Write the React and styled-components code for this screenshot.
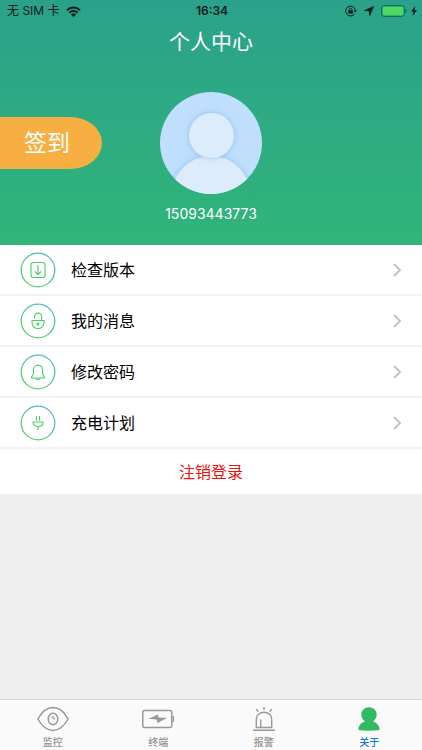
import React, { useState } from "react";
import styled, { createGlobalStyle } from "styled-components";

const GlobalStyle = createGlobalStyle`
  *, *::before, *::after { box-sizing: border-box; }
  body {
    margin: 0;
    background: #efefef;
    font-family: Inter, "Noto Sans CJK SC", sans-serif;
  }
  button { font-family: inherit; margin: 0; padding: 0; border: 0; background: none; cursor: pointer; }
  svg { display: block; flex: none; }
`;

const Page = styled.div`
  display: flex;
  flex-direction: column;
  min-height: 100vh;
`;

const Header = styled.header`
  height: 245px;
  display: flex;
  flex-direction: column;
  background: linear-gradient(#2ba18b, #30b579);
`;

const StatusBar = styled.div`
  display: grid;
  grid-template-columns: 1fr auto 1fr;
  align-items: center;
  height: 20px;
  padding: 2px 5px 0 7px;
  font-size: 12px;
  line-height: 18px;
  color: #0b1a17;
`;

const StatusGroup = styled.div`
  display: flex;
  align-items: center;
  gap: ${(p) => p.$gap}px;
  justify-content: ${(p) => (p.$end ? "flex-end" : "flex-start")};
`;

const Clock = styled.time`
  font-weight: 600;
`;

const Title = styled.h1`
  margin: 0;
  padding-top: 6px;
  text-align: center;
  font-size: 21px;
  line-height: 32px;
  font-weight: 400;
  color: #fff;
`;

const Profile = styled.section`
  display: grid;
  grid-template-columns: 1fr auto 1fr;
  align-items: center;
  padding-top: 34px;
`;

const CheckIn = styled.button`
  && {
    width: 102px;
    height: 52px;
    padding-right: 8px;
    border-radius: 0 32px 32px 0 / 0 26px 26px 0;
    background: #f8af42;
    color: #fff;
    font-size: 23px;
    line-height: 32px;
  }
`;

const Phone = styled.p`
  margin: 0;
  padding-top: 10px;
  text-align: center;
  font-size: 14px;
  line-height: 20px;
  color: #fff;
`;

const Menu = styled.ul`
  list-style: none;
  margin: 0;
  padding: 0;
  background: #fff;
`;

const MenuRow = styled.button`
  && {
    display: flex;
    align-items: center;
    width: 100%;
    height: 51px;
    padding: 0 20px;
    border-bottom: 2px solid #f4f4f5;
    text-align: left;
  }
`;

const MenuLabel = styled.span`
  flex: 1;
  padding-left: 15px;
  font-size: 16px;
  line-height: 24px;
  color: #000;
`;

const Logout = styled.button`
  && {
    width: 100%;
    height: 45px;
    background: #fff;
    color: #e8140f;
    font-size: 16px;
    line-height: 24px;
  }
`;

const TabBar = styled.nav`
  display: grid;
  grid-template-columns: repeat(4, 1fr);
  height: 51px;
  margin-top: auto;
  border-top: 1px solid #d3d3d3;
  background: #fafafa;
`;

const Tab = styled.button`
  && {
    display: flex;
    flex-direction: column;
    align-items: center;
    padding-top: 4px;
    color: ${(p) => (p.$active ? "#1673e6" : "#929292")};
    font-size: 10px;
    line-height: 17px;
    font-weight: 500;
  }
`;

const WifiIcon = () => (
  <svg width="15" height="11" viewBox="0 0 15 11" fill="none" stroke="currentColor" strokeWidth="2" aria-hidden="true">
    <path d="M1 4.2a9.2 9.2 0 0 1 13 0" />
    <path d="M3.4 6.7a5.8 5.8 0 0 1 8.2 0" />
    <path d="M7.5 11 5 8.5a3.5 3.5 0 0 1 5 0Z" fill="currentColor" stroke="none" />
  </svg>
);

const RotationLockIcon = () => (
  <svg width="12" height="12" viewBox="0 0 12 12" fill="none" stroke="currentColor" aria-hidden="true">
    <path d="M9.500 9A4.900 4.900 0 1 1 10.300 4.800" />
    <path d="m8.600 5.200 3.400 0-1.600 2.400Z" fill="currentColor" stroke="none" />
    <rect x="3.300" y="5.300" width="4.600" height="3.300" rx=".4" fill="currentColor" stroke="none" />
    <path d="M4.300 5.400V4.600a1.300 1.300 0 0 1 2.600 0v.8" strokeWidth=".8" />
  </svg>
);

const LocationIcon = () => (
  <svg width="10" height="10" viewBox="0 0 10 10" fill="currentColor" stroke="currentColor" strokeWidth=".6" strokeLinejoin="round" aria-hidden="true">
    <path d="M9.600.400 5.800 9.500 5.200 5 .400 4.500Z" />
  </svg>
);

const BatteryIcon = () => (
  <svg width="26" height="12" viewBox="0 0 26 12" aria-hidden="true">
    <rect x=".6" y=".6" width="22.800" height="10.800" rx="2.600" fill="none" stroke="#17695a" />
    <rect x="1.800" y="1.800" width="20.400" height="8.400" rx="1.200" fill="#4cda62" />
    <path d="M24.400 4v4c1.600-.5 1.600-3.500 0-4Z" fill="#17695a" />
  </svg>
);

const BoltIcon = () => (
  <svg width="6" height="10" viewBox="0 0 6 10" fill="currentColor" aria-hidden="true">
    <path d="M4.300 0 0 5.600h2.500L1.600 10 6 4.200H3.500Z" />
  </svg>
);

const Avatar = () => (
  <svg width="102" height="102" viewBox="0 0 102 102" role="img" aria-label="头像">
    <defs>
      <clipPath id="avatar-clip"><circle cx="51" cy="51" r="51" /></clipPath>
      <filter id="avatar-shadow" x="-20%" y="-20%" width="140%" height="140%">
        <feDropShadow dx="0" dy="0" stdDeviation="3" floodColor="#77aee8" floodOpacity=".65" />
      </filter>
    </defs>
    <g clipPath="url(#avatar-clip)">
      <rect width="102" height="102" fill="#bfdffc" />
      <ellipse cx="51" cy="105" rx="40" ry="41" fill="#ddecfa" filter="url(#avatar-shadow)" />
      <circle cx="51.500" cy="43.500" r="22.500" fill="#ddecfa" filter="url(#avatar-shadow)" />
    </g>
  </svg>
);

const glyphs = {
  download: (
    <>
      <rect x="11" y="10.500" width="14" height="15" rx="2.500" />
      <path d="M18 13v9.500m-3.200-3.200 3.200 3.200 3.200-3.200" />
    </>
  ),
  lock: (
    <>
      <path d="M14.500 15.500v-1.500a3.600 3.900 0 0 1 7.200 0v3.500" />
      <path d="M12 17.500h12v2a6 6.300 0 0 1-12 0Z" />
      <path d="m18 19.200 1.700 1.900-1.700 1.900-1.700-1.900Z" fill="#48cd66" stroke="none" />
    </>
  ),
  bell: (
    <>
      <path d="M18 10v1.300c-3 0-4.600 2.300-4.600 5.200v3.700L11.500 23v1h13v-1l-1.900-2.800v-3.700c0-2.900-1.600-5.200-4.600-5.200" />
      <path d="M16 24.300a2 1.500 0 0 0 4 0" />
    </>
  ),
  plug: (
    <>
      <path d="M16.500 11v4.500m3-4.500v4.500M13 17h10v.5c0 2.200-2 4-5 4s-5-1.800-5-4Zm5 4.500v3.500" />
    </>
  ),
};

const MenuIcon = ({ name }) => (
  <svg width="36" height="36" viewBox="0 0 36 36" fill="none" aria-hidden="true">
    <defs>
      <linearGradient id={`ring-${name}`} x1="0" y1="1" x2="1" y2="0">
        <stop offset=".15" stopColor="#58cf68" />
        <stop offset=".55" stopColor="#50c49b" />
        <stop offset="1" stopColor="#5bb5d8" />
      </linearGradient>
    </defs>
    <circle cx="18" cy="18" r="16.800" stroke={`url(#ring-${name})`} strokeWidth="1.300" />
    <g stroke="#48cd66" strokeWidth="1.100" strokeLinejoin="round">{glyphs[name]}</g>
  </svg>
);

const Chevron = () => (
  <svg width="10" height="14" viewBox="0 0 10 14" fill="none" stroke="#c3c3c7" strokeWidth="2" aria-hidden="true">
    <path d="m2 1 6 6-6 6" />
  </svg>
);

const EyeIcon = () => (
  <svg width="32" height="30" viewBox="0 0 32 30" fill="none" stroke="#999" strokeWidth="1.500" aria-hidden="true">
    <path d="M.9 15C5 7.500 9.600 3.600 16 3.600S27 7.500 31.100 15C27 22.500 22.400 26.400 16 26.400S5 22.500.9 15Z" />
    <ellipse cx="16" cy="15" rx="4.800" ry="5.700" />
    <path d="M14.500 12.700 17.500 15.800M15 12.400c1.700-.1 2.800 1 2.700 2.600" strokeWidth=".9" />
  </svg>
);

const PowerIcon = () => (
  <svg width="32" height="30" viewBox="0 0 32 30" fill="none" stroke="#999" strokeWidth="1.500" aria-hidden="true">
    <rect x=".8" y="6.400" width="29" height="17" rx="2" />
    <path d="M31.300 12v6" strokeWidth="1.400" />
    <path d="m6.500 14.700 9.500-4.200.7 3 8.300.5-9.500 4.900-.8-3.500Z" fill="#999" stroke="none" />
  </svg>
);

const AlarmIcon = () => (
  <svg width="32" height="30" viewBox="0 0 32 30" fill="none" stroke="#999" strokeWidth="1.400" aria-hidden="true">
    <path d="M5 26.300h22M8.300 23.500V15a7.700 6.800 0 0 1 15.400 0v8.500ZM12.800 23.500v-8M16 3v3M8.200 5.300l2 2.600M23.800 5.300l-2 2.600" />
  </svg>
);

const PersonIcon = () => (
  <svg width="32" height="30" viewBox="0 0 32 30" fill="#31ba61" aria-hidden="true">
    <path d="M16 3.200c-4.500 0-7.700 3.300-7.700 7.500 0 2.900 1.400 5.200 3.600 6.500-3.700 1.500-6.500 4.500-6.500 8.900 6.500.9 14.700.9 21.200 0 0-4.400-2.800-7.400-6.500-8.900 2.200-1.300 3.600-3.600 3.600-6.500 0-4.200-3.200-7.500-7.700-7.500Z" />
  </svg>
);

const menuItems = [
  { label: "检查版本", icon: "download" },
  { label: "我的消息", icon: "lock" },
  { label: "修改密码", icon: "bell" },
  { label: "充电计划", icon: "plug" },
];

const tabs = [
  { label: "监控", Icon: EyeIcon },
  { label: "终端", Icon: PowerIcon },
  { label: "报警", Icon: AlarmIcon },
  { label: "关于", Icon: PersonIcon },
];

export default function App() {
  const [active, setActive] = useState("关于");
  return (
    <>
      <GlobalStyle />
      <Page>
        <Header>
          <StatusBar>
            <StatusGroup $gap={6}>
              <span>无 SIM 卡</span>
              <WifiIcon />
            </StatusGroup>
            <Clock>16:34</Clock>
            <StatusGroup $gap={7} $end>
              <RotationLockIcon />
              <LocationIcon />
              <StatusGroup $gap={4}>
                <BatteryIcon />
                <BoltIcon />
              </StatusGroup>
            </StatusGroup>
          </StatusBar>
          <Title>个人中心</Title>
          <Profile>
            <CheckIn type="button">签到</CheckIn>
            <Avatar />
          </Profile>
          <Phone>15093443773</Phone>
        </Header>
        <main>
          <Menu>
            {menuItems.map(({ label, icon }) => (
              <li key={label}>
                <MenuRow type="button">
                  <MenuIcon name={icon} />
                  <MenuLabel>{label}</MenuLabel>
                  <Chevron />
                </MenuRow>
              </li>
            ))}
          </Menu>
          <Logout type="button">注销登录</Logout>
        </main>
        <TabBar>
          {tabs.map(({ label, Icon }) => (
            <Tab
              key={label}
              type="button"
              $active={label === active}
              aria-current={label === active ? "page" : undefined}
              onClick={() => setActive(label)}
            >
              <Icon />
              {label}
            </Tab>
          ))}
        </TabBar>
      </Page>
    </>
  );
}
